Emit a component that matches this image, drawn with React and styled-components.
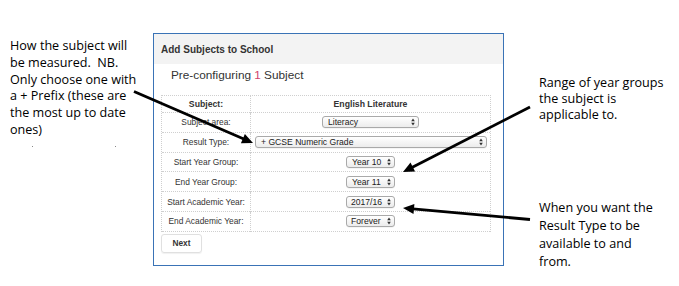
import React from "react";
import styled, { createGlobalStyle } from "styled-components";

const Global = createGlobalStyle`
  html, body { margin: 0; padding: 0; background: #fff; }
  body { font-family: "Liberation Sans", Arial, sans-serif; }
`;

const Page = styled.div`
  position: relative;
  width: 679px;
  height: 286px;
  display: flex;
  background: #fff;
  overflow: hidden;
`;

const LeftCol = styled.div`
  width: 153px;
  flex: none;
  box-sizing: border-box;
  padding: 38px 0 0 10px;
`;

const Note = styled.div`
  font-family: "Open Sans", "Noto Sans", sans-serif;
  font-size: 12.6px;
  line-height: ${(p) => p.$lh || 16.8}px;
  color: #000;
  margin-top: ${(p) => p.$mt || 0}px;
  white-space: nowrap;
`;

const DotsRow = styled.div`
  display: flex;
  gap: 82px;
  padding-left: 22px;
  margin-top: 7px;
`;

const Dot = styled.span`
  width: 1px;
  height: 1px;
  background: #888;
`;

const RightCol = styled.div`
  flex: 1;
  display: flex;
  flex-direction: column;
  padding-left: 35px;
`;

const Panel = styled.div`
  width: 351px;
  height: 233px;
  margin-top: 33px;
  box-sizing: border-box;
  border: 1px solid #3a73b6;
  background: #fff;
  flex: none;
  display: flex;
  flex-direction: column;
`;

const PanelHeader = styled.div`
  height: 30px;
  background: #f3f3f3;
  display: flex;
  align-items: center;
  padding-left: 7px;
  box-sizing: border-box;
  font-weight: bold;
  font-size: 10px;
  color: #333;
`;

const PanelBody = styled.div`
  padding: 0 11px 0 7px;
`;

const Heading = styled.div`
  font-size: 11.8px;
  line-height: 14px;
  color: #333;
  margin: 4px 0 13px 10px;
`;

const Count = styled.span`
  color: #d0456e;
`;

const Table = styled.div`
  display: grid;
  grid-template-columns: 88px 1fr;
  border: 1px dotted #cfcfcf;
  border-bottom: none;
  width: 330px;
  box-sizing: border-box;
`;

const Cell = styled.div`
  height: ${(p) => (p.$head ? 16 : 18.8)}px;
  border-bottom: 1px dotted #cfcfcf;
  border-left: ${(p) => (p.$value ? "1px dotted #cfcfcf" : "none")};
  display: flex;
  align-items: center;
  justify-content: center;
  font-size: ${(p) => (p.$head ? 8.7 : 8.4)}px;
  font-weight: ${(p) => (p.$head ? "bold" : "normal")};
  color: #333;
  white-space: nowrap;
`;

const ValueCell = styled(Cell)`
  justify-content: ${(p) => (p.$wide ? "flex-start" : "center")};
  padding-left: ${(p) => (p.$wide ? 4 : 0)}px;
`;

const SelectBox = styled.div`
  width: ${(p) => p.$w}px;
  height: 12px;
  box-sizing: border-box;
  border: 1px solid #a9a9a9;
  border-radius: 3px;
  background: linear-gradient(#ffffff, #ececec);
  display: flex;
  align-items: center;
  justify-content: space-between;
  padding: 0 3px 0 ${(p) => p.$pl || 5}px;
  font-size: 8.6px;
  color: #222;
  box-shadow: 0 0.5px 0 rgba(0, 0, 0, 0.08);
`;

const Chevrons = () => (
  <svg width="4" height="8" viewBox="0 0 4 8">
    <path d="M2 0.5 L3.8 3.2 L0.2 3.2 Z" fill="#333" />
    <path d="M2 7.5 L3.8 4.8 L0.2 4.8 Z" fill="#333" />
  </svg>
);

const Select = ({ w, pl, children }) => (
  <SelectBox $w={w} $pl={pl}>
    <span>{children}</span>
    <Chevrons />
  </SelectBox>
);

const NextButton = styled.div`
  width: 41px;
  height: 19px;
  margin-top: 2px;
  box-sizing: border-box;
  border: 1px solid #e0e0e0;
  border-radius: 3px;
  box-shadow: 0 1px 1px rgba(0, 0, 0, 0.06);
  display: flex;
  align-items: center;
  justify-content: center;
  font-size: 8.3px;
  font-weight: bold;
  color: #333;
`;

const Overlay = styled.svg`
  position: absolute;
  left: 0;
  top: 0;
  pointer-events: none;
`;

function arrow(x1, y1, x2, y2) {
  const dx = x2 - x1;
  const dy = y2 - y1;
  const len = Math.hypot(dx, dy);
  const ux = dx / len;
  const uy = dy / len;
  const L = 11;
  const W = 5;
  const bx = x2 - ux * L;
  const by = y2 - uy * L;
  const nx = -uy;
  const ny = ux;
  return {
    line: { x1, y1, x2: bx + ux * 1, y2: by + uy * 1 },
    pts: `${x2},${y2} ${bx + nx * W},${by + ny * W} ${bx - nx * W},${by - ny * W}`,
  };
}

const arrows = [
  arrow(134, 91.5, 253, 143),
  arrow(530, 107, 403, 172),
  arrow(530, 219.5, 403, 208),
];

const rows = [
  { label: "Subject area:", sel: "Literacy", w: 97 },
  { label: "Result Type:", sel: "+ GCSE Numeric Grade", w: 232, wide: true },
  { label: "Start Year Group:", sel: "Year 10", w: 49 },
  { label: "End Year Group:", sel: "Year 11", w: 49 },
  { label: "Start Academic Year:", sel: "2017/16", w: 49, pl: 4 },
  { label: "End Academic Year:", sel: "Forever", w: 49, pl: 4 },
];

export default function App() {
  return (
    <>
      <Global />
      <Page>
        <LeftCol>
          <Note>
            How the subject will
            <br />
            be measured.&nbsp; NB.
            <br />
            Only choose one with
            <br />
            a + Prefix (these are
            <br />
            the most up to date
            <br />
            ones)
          </Note>
          <DotsRow>
            <Dot />
            <Dot />
          </DotsRow>
        </LeftCol>
        <Panel>
          <PanelHeader>Add Subjects to School</PanelHeader>
          <PanelBody>
            <Heading>
              Pre-configuring <Count>1</Count> Subject
            </Heading>
            <Table>
              <Cell $head>Subject:</Cell>
              <Cell $head $value>
                English Literature
              </Cell>
              {rows.map((r) => (
                <React.Fragment key={r.label}>
                  <Cell>{r.label}</Cell>
                  <ValueCell $value $wide={r.wide}>
                    <Select w={r.w} pl={r.pl}>
                      {r.sel}
                    </Select>
                  </ValueCell>
                </React.Fragment>
              ))}
            </Table>
            <NextButton>Next</NextButton>
          </PanelBody>
        </Panel>
        <RightCol>
          <Note $mt={75} $lh={16}>
            Range of year groups
            <br />
            the subject is
            <br />
            applicable to.
          </Note>
          <Note $mt={76} $lh={18}>
            When you want the
            <br />
            Result Type to be
            <br />
            available to and
            <br />
            from.
          </Note>
        </RightCol>
        <Overlay width="679" height="286" viewBox="0 0 679 286">
          {arrows.map((a, i) => (
            <g key={i}>
              <line {...a.line} stroke="#000" strokeWidth="2.8" />
              <polygon points={a.pts} fill="#000" />
            </g>
          ))}
        </Overlay>
      </Page>
    </>
  );
}
